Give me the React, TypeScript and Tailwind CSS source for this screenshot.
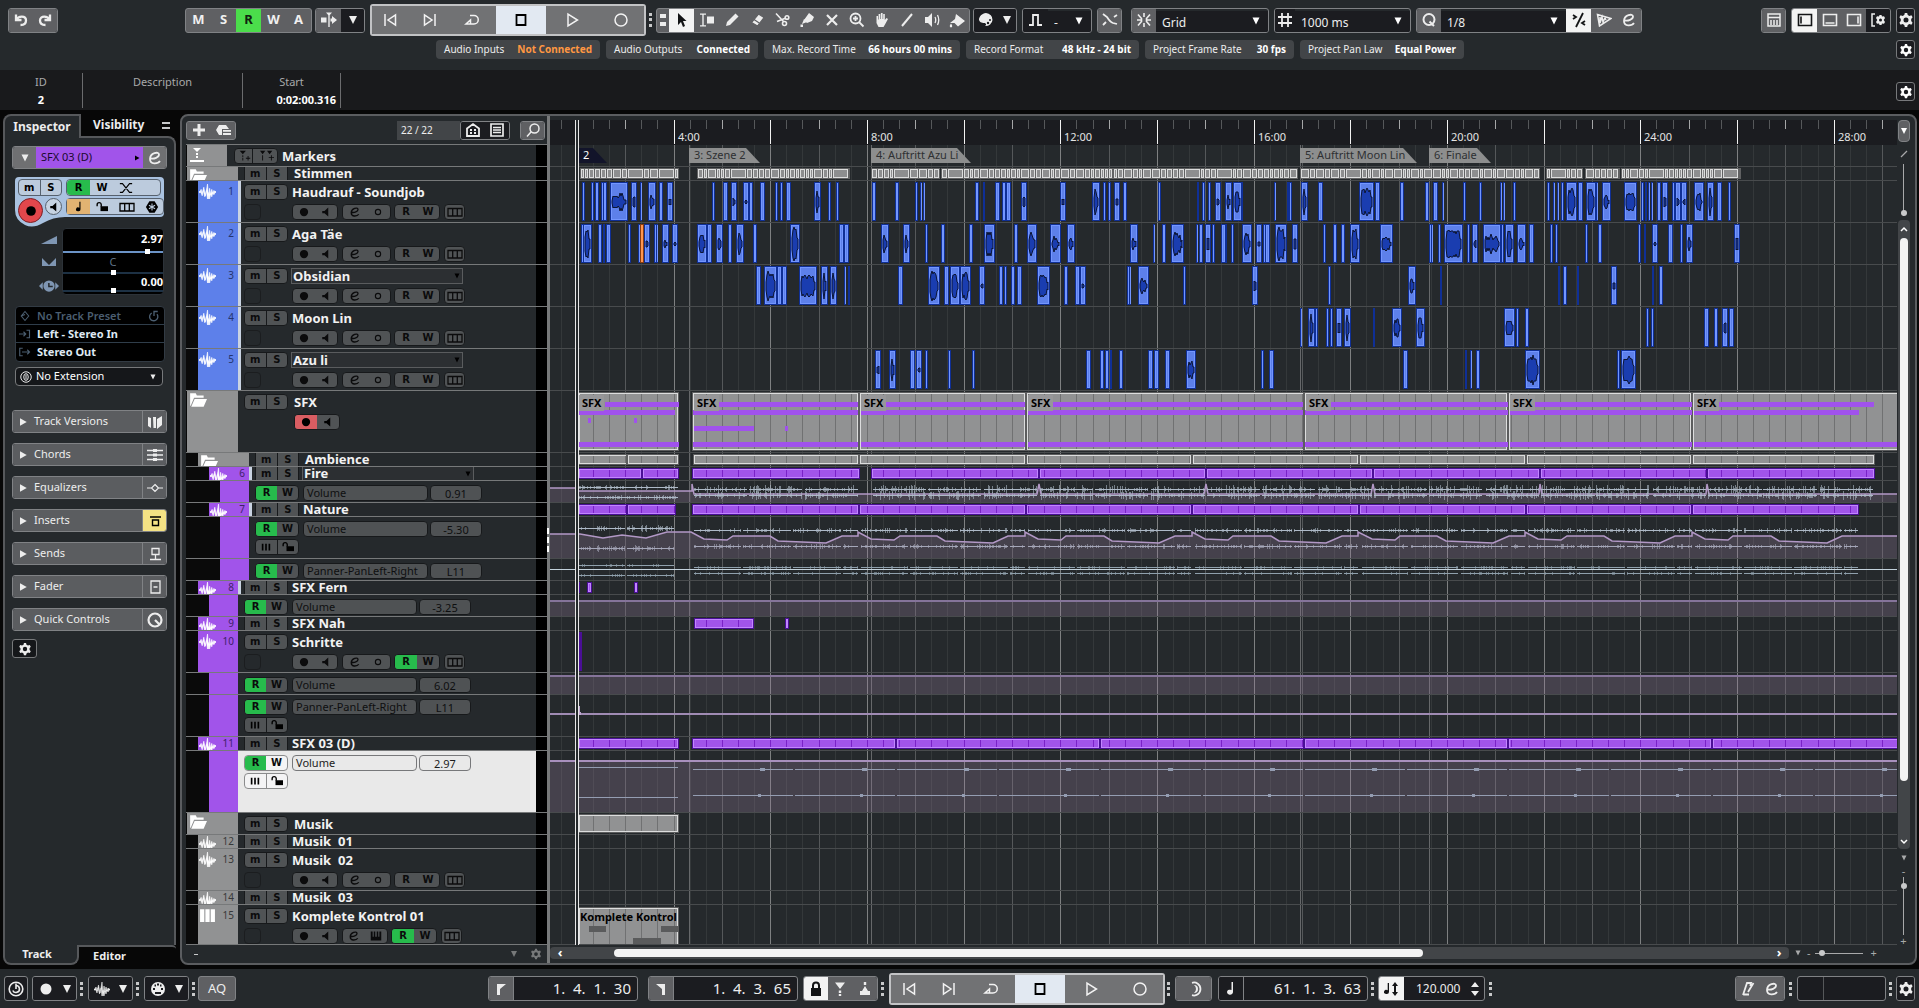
import type { ReactNode } from "react";
import { clsx } from "clsx";

/* ---------- timeline maths ---------- */

// clip positions are stored in ticks, 2.24 ticks to a pixel
const TICKS_PER_PX = 2.24;
const ORIGIN = 22;
const END = 3060;
const LATE = 1523; // offset of the second half of the show

const px = (tick: number) => Math.round((tick - ORIGIN) / TICKS_PER_PX);
const minuteToPx = (minute: number) => Math.round(minute * 48.34 - 69.8);

type Span = [number, number];

function spans(text: string, offset = 0): Span[] {
  return text.split(" ").map((part) => {
    const [start, end] = part.split("-").map(Number);
    return [start + offset, end + offset];
  });
}

function chain(...points: number[]): Span[] {
  return points.slice(1).map((end, i) => [points[i], end]);
}

function rng(seed: number) {
  let s = seed * 7919 + 13;
  return () => {
    s = (s * 1103515245 + 12345) % 2147483648;
    return s / 2147483648;
  };
}

/* ---------- clip data ---------- */

const haudrauf = [
  ...spans(
    "94-101 113-121 122-131 136-141 141-149 156-196 203-218 223-229 242-259 266-275 283-297 384-391 409-421 427-441 454-467 467-477 492-503 526-532 538-543 550-561 614-628 644-651 663-669 744-752 795-803 839-846 851-856 857-863 973-982 992-996 1018-1029 1034-1043 1043-1054 1077-1090 1164-1177 1235-1253 1261-1267 1272-1278 1285-1299 1306-1314 1385-1391 1472-1476 1483-1489 1496-1503 1511-1526 1536-1549 1553-1575",
  ),
  ...spans(
    "12-26 30-50 120-125 149-153 155-160 182-196 219-230 312-345 347-358 404-412 458-467 477-488 496-502 544-551 580-587 627-632 633-639 657-663 732-739 746-751 754-760 763-770 775-800 802-813 820-841 841-847 855-876 904-933 942-950 951-955 959-964 965-970 979-988 990-1004 1012-1019 1020-1033 1033-1045 1061-1084 1091-1107 1113-1125 1138-1145",
    LATE,
  ),
];

const agaTaee = [
  ...spans(
    "91-96 97-116 130-138 140-144 147-158 196-203 219-224 232-245 254-259 260-265 272-289 296-308 352-373 373-386 393-409 421-429 439-457 476-485 560-581 669-680 680-692 764-781 812-828 862-868 898-907 960-969 995-1019 1061-1070 1090-1112 1143-1167 1181-1197 1322-1339 1372-1377 1392-1402 1412-1442 1468-1473 1475-1484 1489-1502 1504-1511 1526-1538 1548-1554",
  ),
  ...spans(
    "2-14 25-31 50-71 80-95 96-101 101-112 124-149 161-174 230-238 252-261 270-279 292-313 358-387 468-473 473-478 488-495 501-545 552-560 564-577 588-629 630-635 638-658 666-685 692-703 738-746 750-757 817-823 846-856 936-943 950-954 968-982 1004-1015 1031-1036 1044-1060 1152-1165",
    LATE,
  ),
];

const obsidian = [
  ...spans(
    "484-494 501-530 530-541 541-553 579-619 628-644 649-664 680-685 690-694 802-812 868-895 905-915 919-940 940-965 982-996 1028-1036 1040-1046 1054-1063 1069-1079 1114-1143 1174-1182 1197-1209 1209-1222 1314-1319 1319-1324 1339-1363 1440-1447",
  ),
  ...spans("71-84 242-249 420-439 493-497 758-762 769-778 799-803 876-889 967-971 983-992", LATE),
];

const moonLin = spans(
  "178-183 196-212 212-219 238-243 247-253 260-272 278-293 343-347 386-407 438-459 636-660 662-670 682-693 953-961 965-971 1084-1096 1106-1115 1125-1137 1139-1152",
  LATE,
);

const azuLi = [
  ...spans(
    "750-764 782-796 828-840 842-856 862-869 913-920 968-973 1223-1234 1255-1262 1266-1274 1277-1281 1297-1306 1362-1372 1376-1386 1400-1411 1446-1469",
  ),
  ...spans("92-99 110-121 409-421 549-553 559-565 574-583 682-717 888-895 898-932", LATE),
];

const stimmen = [
  ...spans("90-310 352-694 742-896 898-1282 1284-1698"),
  ...spans("179-717 731-814 817-895 897-1166", LATE),
];

const sfxFolder = chain(340, 715, 1089, 1711, 2169, 2581, END);
const ambience = [...chain(84, 194, 312), ...chain(342, 714, 1088, 1460, 1834, 2208, 2581, 2989)];
const fire = [...chain(84, 227, 312), [341, 717] as Span, ...chain(742, 1117, 1491, 1865, 2240, 2614, 2989)];
const nature = [...chain(84, 194, 304), ...chain(341, 714, 1088, 1460, 1834, 2208, 2581, 2955)];
const sfx03 = [[84, 312] as Span, ...chain(340, 797, 1254, 1711, 2168, 2625, END)];

const markers = [
  { at: 333, end: 492, label: "3: Szene 2" },
  { at: 740, end: 964, label: "4: Auftritt Azu Li" },
  { at: 1701, end: 1964, label: "5: Auftritt Moon Lin" },
  { at: 1991, end: 2130, label: "6: Finale" },
];

/* ---------- timeline pieces ---------- */

function Canvas({ children }: { children: ReactNode }) {
  return (
    <svg className="absolute inset-0 h-full w-full" shapeRendering="crispEdges" aria-hidden="true">
      {children}
    </svg>
  );
}

function envelope(x: number, w: number, mid: number, seed: number) {
  const rand = rng(seed);
  const base = 4 + rand() * 10;
  const top: string[] = [];
  const bottom: string[] = [];
  for (let i = 0; i <= w; i += 1) {
    const edge = i === 0 || i >= w - 1 ? 0.4 : 1;
    const spread = i % 2 ? 1.5 : 7;
    const amp = Math.max(1, Math.round((base + (rand() - 0.5) * spread) * edge));
    top.push(`${x + i},${mid - amp}`);
    bottom.unshift(`${x + i},${mid + amp}`);
  }
  return [...top, ...bottom].join(" ");
}

function VoiceClips({ items, hot }: { items: Span[]; hot?: Span }) {
  return (
    <Canvas>
      {items.map(([start, end]) => {
        const x = px(start);
        const w = Math.max(px(end) - x, 2);
        return (
          <g key={start}>
            <rect x={x} y={1} width={w} height={39} fill="#0f2f96" />
            {end - start > 4 && <rect x={x + 1} y={2} width={Math.max(w - 2, 1)} height={37} fill="#7396ff" />}
            {w > 4 && <rect x={x + 2} y={3} width={w - 4} height={35} fill="#5d80ea" />}
            {end - start > 10 && w > 5 && (
              <polygon
                points={envelope(x + 2, w - 4, 21, start)}
                fill="#1a3db0"
                stroke="#0b1536"
                strokeWidth={1}
                shapeRendering="auto"
              />
            )}
          </g>
        );
      })}
      {hot && (
        <>
          <rect x={px(hot[0])} y={1} width={4} height={39} fill="#8a3c10" />
          <rect x={px(hot[0]) + 1} y={2} width={2} height={37} fill="#ff9650" />
        </>
      )}
    </Canvas>
  );
}

function gridInside(x: number, w: number) {
  const lines: number[] = [];
  for (let m = 0; m < 96; m++) {
    const gx = minuteToPx(m / 3);
    if (gx > x + 1 && gx < x + w - 1) lines.push(gx);
  }
  return lines;
}

function Blocks({
  items,
  tone,
  top = 1,
  height = 11,
}: {
  items: Span[];
  tone: "purple" | "gray";
  top?: number;
  height?: number;
}) {
  const purple = tone === "purple";
  return (
    <Canvas>
      {items.map(([start, end]) => {
        const x = px(start);
        const w = Math.max(px(end) - x, 2);
        return (
          <g key={start}>
            <rect x={x} y={top} width={w} height={height} fill={purple ? "#4a0f96" : "#5c5d5e"} />
            {end - start > 7 && (
              <rect
                x={x + 1}
                y={top + 1}
                width={Math.max(w - 2, 1)}
                height={height - 2}
                fill={purple ? "#c285ff" : "#dcdddd"}
              />
            )}
            {w > 4 && (
              <rect x={x + 2} y={top + 2} width={w - 4} height={height - 4} fill={purple ? "#a154ea" : "#919293"} />
            )}
            {gridInside(x, w).map((gx) => (
              <rect
                key={gx}
                x={gx}
                y={top + 2}
                width={1}
                height={height - 4}
                fill={purple ? "#7a22c8" : "#707172"}
              />
            ))}
          </g>
        );
      })}
    </Canvas>
  );
}

function FolderPieces() {
  const rand = rng(5);
  return (
    <Canvas>
      {stimmen.map(([start, end]) => {
        const x = px(start);
        const w = px(end) - x;
        const pieces: Span[] = [];
        let at = x + 1;
        while (at < x + w - 3) {
          const roll = rand();
          const size = roll > 0.93 ? 15 : roll > 0.72 ? 8 : roll > 0.35 ? 5 : 3;
          pieces.push([at, Math.min(size, x + w - 1 - at)]);
          at += size + 1;
        }
        return (
          <g key={start}>
            <rect x={x} y={1} width={w} height={11} fill="#606162" />
            {pieces.map(([p, s]) => (
              <g key={p}>
                <rect x={p} y={2} width={s} height={9} fill="#dcdddd" />
                {s > 2 && <rect x={p + 1} y={3} width={s - 2} height={7} fill="#8d8e8f" />}
              </g>
            ))}
          </g>
        );
      })}
    </Canvas>
  );
}

function Wave({ from, to, y, amp, color = "#aebac8" }: { from: number; to: number; y: number; amp: number; color?: string }) {
  const rand = rng(Math.round(from + y));
  const x = px(from);
  const w = px(to) - x;
  let d = "";
  for (let i = 0; i < w; i++) {
    const r = rand();
    const a = Math.round(r ** 4 * amp);
    if (a) d += `M${x + i} ${y - a}v${a * 2 + 1}`;
  }
  return (
    <>
      <path d={d} transform="translate(0.5 0)" stroke={color} strokeWidth={1} opacity={0.6} />
      <rect x={x} y={y} width={w} height={1} fill={color} />
    </>
  );
}

function Automation({ points, floor }: { points: Span[]; floor: number }) {
  const line = points.map(([t, y]) => `${px(t)},${y}`).join(" ");
  return (
    <>
      <polygon points={`${line} ${px(END)},${floor} 0,${floor}`} fill="rgb(147 124 151 / 0.3)" />
      <polyline points={line} fill="none" stroke="#b298c6" strokeWidth={1.5} shapeRendering="auto" />
    </>
  );
}

const repeats = [0, 374, 747, 1121, 1495, 1868, 2242];

function FireVolume() {
  const points: Span[] = [[22, 7], [84, 7], [84, 10], [340, 10], [340, 3], [345, 13]];
  for (const at of [1117, 1491, 1865, 2240, 2614]) points.push([at - 3, 13], [at, 3], [at + 4, 13]);
  points.push([END, 13]);
  const parts: Span[] = [[345, 464], [468, 587], [594, 712]];
  for (let i = 0; i < 6; i++) {
    const o = i * 374.2;
    parts.push([746 + o, 865 + o], [869 + o, 988 + o], [995 + o, 1114 + o]);
  }
  return (
    <Canvas>
      <Automation points={points} floor={21} />
      {[6, 16].map((y) => (
        <Wave key={y} from={87} to={309} y={y} amp={2} />
      ))}
      {parts.map(([a, b]) => (
        <g key={a}>
          <Wave from={a} to={b} y={8} amp={4} />
          <Wave from={a} to={b} y={14} amp={4} />
        </g>
      ))}
    </Canvas>
  );
}

const natureParts: Span[] = repeats.flatMap((o) =>
  ([[345, 450], [455, 562], [567, 674], [679, 711]] as Span[]).map(([a, b]): Span => [a + o, b + o]),
);

function NatureVolume() {
  const points: Span[] = [[22, 17], [90, 17], [140, 21], [183, 18], [238, 21], [284, 15], [338, 15]];
  for (const o of repeats) {
    points.push([368 + o, 22], [419 + o, 23], [431 + o, 19], [515 + o, 19], [533 + o, 24], [640 + o, 26], [675 + o, 19]);
    if (o < 2242) points.push([712 + o, 19], [712 + o, 15]);
  }
  points.push([END, 19]);
  return (
    <Canvas>
      {[11, 31].map((y) => (
        <g key={y}>
          <Wave from={87} to={190} y={y} amp={3} />
          <Wave from={195} to={300} y={y} amp={3} />
        </g>
      ))}
      {natureParts.map(([a, b]) => (
        <g key={a}>
          <Wave from={a} to={b} y={13} amp={2} />
          <Wave from={a} to={b} y={29} amp={2} />
        </g>
      ))}
      <Automation points={points} floor={41} />
    </Canvas>
  );
}

function NaturePanner() {
  return (
    <Canvas>
      <rect x={0} y={10} width="100%" height={1} fill="#c3d2dc" />
      {[6, 16].map((y) => (
        <g key={y}>
          <Wave from={87} to={190} y={y} amp={1} color="#8fa0ac" />
          <Wave from={195} to={300} y={y} amp={1} color="#8fa0ac" />
        </g>
      ))}
      {natureParts.map(([a, b]) => (
        <g key={a}>
          <Wave from={a} to={b} y={8} amp={1} color="#8fa0ac" />
          <Wave from={a} to={b} y={14} amp={1} color="#8fa0ac" />
        </g>
      ))}
    </Canvas>
  );
}

function FlatLane({ y, floor }: { y: number; floor: number }) {
  return (
    <Canvas>
      <rect x={0} y={y} width="100%" height={floor - y} fill="rgb(147 124 151 / 0.3)" />
      <rect x={0} y={y} width="100%" height={2} fill="#85749a" />
    </Canvas>
  );
}

function Sfx03Volume() {
  const parts: Span[] = [];
  for (let a = 342; a < END; a += 228.5) parts.push([a, a + 225]);
  return (
    <Canvas>
      <rect x={0} y={10} width="100%" height={51} fill="rgb(147 124 151 / 0.3)" />
      <rect x={0} y={9} width="100%" height={2} fill="#a890bd" />
      <rect x={px(87)} y={16} width={99} height={1} fill="#949db2" />
      <rect x={px(87)} y={46} width={99} height={1} fill="#949db2" />
      {parts.map(([a, b]) => (
        <g key={a} fill="#949db2">
          <rect x={px(a)} y={18} width={px(b) - px(a)} height={1} />
          <rect x={px(a)} y={44} width={px(b) - px(a)} height={1} />
          <rect x={px(a + 150)} y={17} width={5} height={3} />
          <rect x={px(a + 145)} y={43} width={3} height={3} />
        </g>
      ))}
    </Canvas>
  );
}

function ClipLabel({ at, children }: { at: number; children: ReactNode }) {
  return (
    <span
      className="absolute top-1 bg-[#979799] px-[3px] text-[11px] leading-4 font-bold text-black"
      style={{ left: px(at) }}
    >
      {children}
    </span>
  );
}

function SfxLane() {
  const bar = (a: number, b: number, y: number) => (
    <rect key={`${a}-${y}`} x={px(a)} y={y} width={px(b) - px(a)} height={5} fill="#a052ec" />
  );
  return (
    <>
      <Blocks items={[[84, 312], ...sfxFolder]} tone="gray" top={1} height={59} />
      <Canvas>
        {bar(146, 310, 11)}
        {bar(87, 302, 19)}
        {bar(107, 114, 27)}
        {bar(211, 217, 27)}
        {bar(345, 478, 35)}
        {bar(549, 556, 35)}
        {bar(87, 310, 51)}
        {sfxFolder.map(([a, b]) => (
          <g key={a}>
            {bar(a + 60, Math.min(b - 2, 2988), 11)}
            {bar(a + 3, Math.min(b - 2, 2954), 19)}
            {bar(a + 3, b - 2, 51)}
          </g>
        ))}
      </Canvas>
      <ClipLabel at={87}>SFX</ClipLabel>
      {sfxFolder.map(([a]) => (
        <ClipLabel key={a} at={a + 4}>
          SFX
        </ClipLabel>
      ))}
    </>
  );
}

function MarkerLane() {
  return (
    <>
      <div
        className="absolute top-[3px] flex h-[15px] w-7 items-center bg-[#12142a] pl-1 text-[11px] text-white [clip-path:polygon(0_0,50%_0,100%_100%,0_100%)]"
        style={{ left: px(86) }}
      >
        2
      </div>
      {markers.map((m) => (
        <div
          key={m.label}
          className="absolute top-[3px] flex h-[15px] items-center overflow-hidden bg-[#8d8e8e] pl-[5px] text-[11px] whitespace-nowrap text-[#2e3032] [clip-path:polygon(0_0,calc(100%-14px)_0,100%_100%,0_100%)]"
          style={{ left: px(m.at), width: px(m.end) - px(m.at) }}
        >
          {m.label}
        </div>
      ))}
    </>
  );
}

function KompleteLane() {
  return (
    <>
      <Blocks items={[[84, 312]]} tone="gray" top={2} height={60} />
      <Canvas>
        <rect x={39} y={21} width={17} height={6} fill="#5a5b5c" />
        <rect x={111} y={21} width={17} height={6} fill="#5a5b5c" />
        <rect x={83} y={33} width={28} height={6} fill="#5a5b5c" />
      </Canvas>
      <span className="absolute top-1 left-7 w-[101px] overflow-hidden pl-0.5 text-[11px] leading-4 font-bold whitespace-nowrap text-black">
        Komplete Kontrol 01
      </span>
    </>
  );
}

/* ---------- track data ---------- */

type Row = {
  kind: "marker" | "folder" | "audio" | "instrument" | "lane";
  name: string;
  h: string;
  depth?: 0 | 1 | 2;
  num?: number;
  color?: string;
  edge?: boolean;
  select?: boolean;
  big?: boolean;
  read?: boolean;
  value?: string;
  more?: boolean;
  selected?: boolean;
  lane?: ReactNode;
};

const BLUE = "bg-[#5d80ea] text-[#24356e]";
const PURPLE = "bg-[#a154ea] text-[#40206a]";
const GRAY = "bg-[#919293] text-[#38393a]";

const rows: Row[] = [
  { kind: "marker", name: "Markers", h: "h-[22px]", lane: <MarkerLane /> },
  { kind: "folder", name: "Stimmen", h: "h-[14px]", lane: <FolderPieces /> },
  { kind: "audio", name: "Haudrauf - Soundjob", h: "h-[42px]", num: 1, color: BLUE, edge: true, big: true, lane: <VoiceClips items={haudrauf} /> },
  { kind: "audio", name: "Aga Täe", h: "h-[42px]", num: 2, color: BLUE, edge: true, big: true, lane: <VoiceClips items={agaTaee} hot={[223, 231]} /> },
  { kind: "audio", name: "Obsidian", h: "h-[42px]", num: 3, color: BLUE, edge: true, big: true, select: true, lane: <VoiceClips items={obsidian} /> },
  { kind: "audio", name: "Moon Lin", h: "h-[42px]", num: 4, color: BLUE, edge: true, big: true, lane: <VoiceClips items={moonLin} /> },
  { kind: "audio", name: "Azu li", h: "h-[42px]", num: 5, color: BLUE, edge: true, big: true, select: true, lane: <VoiceClips items={azuLi} /> },
  { kind: "folder", name: "SFX", h: "h-[62px]", big: true, lane: <SfxLane /> },
  { kind: "folder", name: "Ambience", h: "h-[14px]", depth: 1, lane: <Blocks items={ambience} tone="gray" /> },
  { kind: "audio", name: "Fire", h: "h-[14px]", depth: 2, num: 6, color: PURPLE, edge: true, select: true, lane: <Blocks items={fire} tone="purple" /> },
  { kind: "lane", name: "Volume", value: "0.91", h: "h-[22px]", depth: 2, lane: <FireVolume /> },
  { kind: "audio", name: "Nature", h: "h-[14px]", depth: 2, num: 7, color: PURPLE, edge: true, lane: <Blocks items={nature} tone="purple" /> },
  { kind: "lane", name: "Volume", value: "-5.30", h: "h-[42px]", depth: 2, more: true, lane: <NatureVolume /> },
  { kind: "lane", name: "Panner-PanLeft-Right", value: "L11", h: "h-[22px]", depth: 2, lane: <NaturePanner /> },
  { kind: "audio", name: "SFX Fern", h: "h-[14px]", num: 8, color: PURPLE, edge: true, lane: <Blocks items={spans("84-90 106-115 211-220")} tone="purple" /> },
  { kind: "lane", name: "Volume", value: "-3.25", h: "h-[22px]", lane: <FlatLane y={5} floor={21} /> },
  { kind: "audio", name: "SFX Nah", h: "h-[14px]", num: 9, color: PURPLE, lane: <Blocks items={spans("345-479 549-558")} tone="purple" /> },
  { kind: "audio", name: "Schritte", h: "h-[42px]", num: 10, color: PURPLE, big: true, read: true, lane: <Blocks items={[[87, 93]]} tone="purple" height={39} /> },
  { kind: "lane", name: "Volume", value: "6.02", h: "h-[22px]", lane: <FlatLane y={2} floor={21} /> },
  {
    kind: "lane",
    name: "Panner-PanLeft-Right",
    value: "L11",
    h: "h-[42px]",
    more: true,
    lane: (
      <Canvas>
        <rect x={0} y={18} width="100%" height={2} fill="#a08bb4" />
        <polygon points="28,0 29,8 31,20 28,20" fill="#bda6cf" />
      </Canvas>
    ),
  },
  { kind: "audio", name: "SFX 03 (D)", h: "h-[14px]", num: 11, color: PURPLE, lane: <Blocks items={sfx03} tone="purple" /> },
  { kind: "lane", name: "Volume", value: "2.97", h: "h-[62px]", more: true, selected: true, lane: <Sfx03Volume /> },
  { kind: "folder", name: "Musik", h: "h-[22px]", lane: <Blocks items={[[84, 312]]} tone="gray" top={1} height={19} /> },
  { kind: "audio", name: "Musik  01", h: "h-[14px]", num: 12, color: GRAY },
  { kind: "audio", name: "Musik  02", h: "h-[42px]", num: 13, color: GRAY, big: true },
  { kind: "audio", name: "Musik  03", h: "h-[14px]", num: 14, color: GRAY },
  { kind: "instrument", name: "Komplete Kontrol 01", h: "h-[40px]", num: 15, color: GRAY, big: true, read: true, lane: <KompleteLane /> },
];

/* ---------- icons ---------- */

const icons = {
  undo: <path d="M3 2.500v5.500h5.500M3.500 7.500C5 4 13 3 13 8.500c0 3.500-3 4.500-5.500 4.500" fill="none" stroke="currentColor" strokeWidth="2.300" />,
  redo: <path d="M13 2.500v5.500H7.500M12.500 7.500C11 4 3 3 3 8.500 3 12 6 13 8.500 13" fill="none" stroke="currentColor" strokeWidth="2.300" />,
  prev: <path d="M2 2v12M12.500 3v10L5 8z" fill="none" stroke="currentColor" strokeWidth="1.500" />,
  next: <path d="M14 2v12M3.500 3v10L11 8z" fill="none" stroke="currentColor" strokeWidth="1.500" />,
  loop: <path d="M6 3.500h4a4 4 0 0 1 0 8.500H2l4.500-4V12" fill="none" stroke="currentColor" strokeWidth="1.500" />,
  stop: <path d="M3.500 3h9v10h-9z" fill="none" stroke="currentColor" strokeWidth="1.800" />,
  play: <path d="M4 2v12l9.500-6z" fill="none" stroke="currentColor" strokeWidth="1.500" />,
  record: <circle cx="8" cy="8" r="6" fill="none" stroke="currentColor" strokeWidth="1.500" />,
  snapshot: <path d="M0 5.500h5.500v5H0zM7.300 3h1.400v12H7.300zM5 .5h6L8 4zM9.500 6.500H11V4l5 4-5 4V9.500H9.500z" fill="currentColor" />,
  caret: <path d="M4 4h8l-4 8z" fill="currentColor" />,
  right: <path d="M4 3v10l9-5z" fill="currentColor" />,
  pointer: <path d="M4 1l8.500 8H9l2 5-2 1-2-5-3 3z" fill="currentColor" />,
  range: <path d="M1 1.500h6v1.300H4.700v10.400H7v1.300H1v-1.300h2.300V2.800H1zM8 4.500h7v7H8z" fill="currentColor" />,
  pencil: <path d="M2 14l1-4L11.500 1.500l3 3L6 13z" fill="currentColor" />,
  eraser: <path d="M9.500 2L15 5.500 8.500 14 2.500 10.500zM5 7.500l6 4" fill="currentColor" stroke="#5f6063" strokeWidth="1.200" />,
  scissors: (
    <g fill="none" stroke="currentColor" strokeWidth="1.600">
      <path d="M2 1.500l7.500 8M12 6L3 9.500" />
      <circle cx="10.500" cy="11.500" r="2" />
      <circle cx="13" cy="5.500" r="1.800" />
    </g>
  ),
  glue: <path d="M10 1l5 4-2 4-5 2-3-3zM5 7l3 3-5 2zM1.500 12.500h2.500V15H1.500z" fill="currentColor" />,
  x: <path d="M3 3l10 10M13 3L3 13" stroke="currentColor" strokeWidth="2.200" />,
  zoom: <path d="M10.500 10.500l4 4M6.500 4v5M4 6.500h5M11.500 6.500a5 5 0 1 1-10 0 5 5 0 0 1 10 0z" fill="none" stroke="currentColor" strokeWidth="1.800" />,
  hand: <path d="M2.500 7.500V4H4v3.500h.6V2h1.700v5h.6V1h1.700v6h.6V2h1.600v6l1.700-2 1.500 1-3 5.500-1.500 2.500h-5L2.500 11z" fill="currentColor" />,
  line: <path d="M3 14L13 2" stroke="currentColor" strokeWidth="2" />,
  speaker: (
    <g>
      <path d="M1 5h3l4-4v14l-4-4H1z" fill="currentColor" />
      <path d="M11 5q1.500 3 0 6M13.500 3q2.500 5 0 10" fill="none" stroke="currentColor" strokeWidth="1.300" />
    </g>
  ),
  bucket: <path d="M7 2l9 7-7 5.500L5.500 11H1l5-4zM2 11.500q2.500 3 0 4-2.500-1 0-4z" fill="currentColor" />,
  palette: (
    <g>
      <path d="M8 1a7 6.500 0 1 1-1 13c2-1 1-3-1-3S1 10 1 7.500 4 1 8 1z" fill="currentColor" />
      <circle cx="10" cy="11" r="1.200" fill="#1b1c20" />
      <circle cx="12" cy="8" r="1" fill="#1b1c20" />
    </g>
  ),
  pulse: <path d="M1 13h4V3h5v10h4" fill="none" stroke="currentColor" strokeWidth="1.800" />,
  cross: <path d="M1 2l4 3q3 5 6 6l4 1M1 13l3-3M12 5l3-2" fill="none" stroke="currentColor" strokeWidth="1.800" />,
  snap: <path d="M8 1v4M8 11v4M2 2.500l3.500 4v3L2 13.500M14 2.500l-3.500 4v3l3.500 4M1 8h4M11 8h4" fill="none" stroke="currentColor" strokeWidth="1.600" />,
  hash: <path d="M5 1v14M11 1v14M1 5h14M1 11h14" stroke="currentColor" strokeWidth="1.800" />,
  q: <path d="M13.500 7.500a5.500 5.500 0 1 1-11 0 5.500 5.500 0 0 1 11 0zM8.500 9.500l4.500 4.500" fill="none" stroke="currentColor" strokeWidth="2" />,
  swing: <path d="M12 1L5 15M2 3l3 2-3 2M14 9l-3 2 3 2" fill="none" stroke="currentColor" strokeWidth="1.800" />,
  warp: <path d="M1.500 2.500L15 6.500 3.500 14zM4 5v6l2-6 1 5 2-4 1 2" fill="none" stroke="currentColor" strokeWidth="1.500" />,
  edit: <path d="M4 8.500c3 .5 8-1 8-4C12 1 3 3 3 9c0 6 8 5 10 2" fill="none" stroke="currentColor" strokeWidth="1.800" />,
  keys: <path d="M2 2h12v12H2zM2 5.500h12M5 8v5M8 8v5M11 8v5" fill="none" stroke="currentColor" strokeWidth="1.500" />,
  zoneL: <path d="M1.500 2.500h13v11h-13zM4 4.500v7" fill="none" stroke="currentColor" strokeWidth="1.600" />,
  zoneB: <path d="M1.500 2.500h13v11h-13zM3.500 11h9" fill="none" stroke="currentColor" strokeWidth="1.600" />,
  zoneR: <path d="M1.500 2.500h13v11h-13zM12 4.500v7" fill="none" stroke="currentColor" strokeWidth="1.600" />,
  gear: (
    <path
      d="M6.800 1h2.400l.5 2 1.700.9 2-.6 1.200 2L13.200 7v2l1.400 1.700-1.200 2-2-.6-1.700.9-.5 2H6.800l-.5-2-1.700-.9-2 .6-1.200-2L2.800 9V7L1.400 5.300l1.200-2 2 .6L6.300 3zM8 5.500a2.500 2.500 0 1 0 0 5 2.500 2.500 0 0 0 0-5z"
      fill="currentColor"
      fillRule="evenodd"
    />
  ),
  bracketGear: (
    <g>
      <path d="M5 2H2v12h3" fill="none" stroke="currentColor" strokeWidth="1.500" />
      <path d="M9.500 3h2l.5 1.500 2-.3 1 1.800-1.300 2 1.300 2-1 1.800-2-.3-.5 1.500h-2L9 11.500l-2 .3L6 10l1.300-2L6 6l1-1.800 2 .3zm1 3.500a1.500 1.500 0 1 0 0 3 1.500 1.500 0 0 0 0-3z" fill="currentColor" fillRule="evenodd" />
    </g>
  ),
  wave: <path d="M0 8h1l1-2 1 4 1.500-6L6 12l1.500-8L8 1l1 14 1-10 1 6 1-5 1 4 1-3 1 1h1v1h-1l-1 2-1-2-1 4-1-3-1 5-1-6-1 6-1-8-1.500 6L4 7l-1 5-1-3-1 0H0z" fill="currentColor" stroke="currentColor" strokeWidth=".6" />,
  folder: <path d="M1 13V2h5l1 2h6v2H4.500L1.500 13zM5 7h11l-3 7H2z" fill="currentColor" />,
  piano: <path d="M1 2h4v12H1zM6 2h4v12H6zM11 2h4v12h-4z" fill="currentColor" />,
  pianoDark: <path d="M1 2h2.500v7h1.500V2h2v7h2V2h2v7h1.500V2H15v12H1z" fill="currentColor" />,
  dot: <circle cx="8" cy="8" r="5.500" fill="currentColor" />,
  monitor: <path d="M11 2v12L6 9.500H3v-3h3z" fill="currentColor" />,
  ring: <circle cx="8" cy="8" r="3.500" fill="none" stroke="currentColor" strokeWidth="1.500" />,
  lanes: <path d="M1 4.500h14v7.500H1zM5.700 4.500V12M10.300 4.500V12" fill="none" stroke="currentColor" strokeWidth="1.300" />,
  bars: <path d="M3.500 3.500v9M8 3.500v9M12.500 3.500v9" stroke="currentColor" strokeWidth="2.200" />,
  unlock: (
    <g>
      <path d="M6 7h10v6.500H6z" fill="currentColor" />
      <path d="M7 7.500V5A2.700 2.700 0 0 0 1.500 5v2" fill="none" stroke="currentColor" strokeWidth="1.800" />
    </g>
  ),
  lock: (
    <g>
      <path d="M3 7h10v8H3z" fill="currentColor" />
      <path d="M5 7.500V4.500a3 3 0 0 1 6 0v3" fill="none" stroke="currentColor" strokeWidth="2" />
    </g>
  ),
  note: <path d="M10 1v10a3 2.500 0 1 1-1.500-2V1z" fill="currentColor" />,
  freeze: (
    <g>
      <path d="M5 1.500h6L15 8l-4 6.500H5L1 8z" fill="currentColor" />
      <path d="M8 4v8M4.500 6l7 4M11.500 6l-7 4" stroke="#bccbdd" strokeWidth="1.200" />
    </g>
  ),
  xfade: <path d="M1 3h3l8 10h3M1 13h3l8-10h3" fill="none" stroke="currentColor" strokeWidth="1.300" />,
  plus: <path d="M8 2v12M2 8h12" stroke="currentColor" strokeWidth="3" />,
  preset: (
    <g>
      <path d="M1 8l3-5h7l3 4H7v6H4z" fill="currentColor" />
      <path d="M8 8.800h8M8 12h8" stroke="currentColor" strokeWidth="1.800" />
    </g>
  ),
  home: <path d="M2 6.500L8 2l6 4.500V14H2zM5 8h2M9 8h2M5 11h2M9 11h2" fill="none" stroke="currentColor" strokeWidth="1.800" />,
  list: <path d="M2 2h12v12H2zM4 5.500h8M4 8h8M4 10.500h8" fill="none" stroke="currentColor" strokeWidth="1.700" />,
  find: <path d="M14 6.500a4.500 4.500 0 1 1-9 0 4.500 4.500 0 0 1 9 0zM6 10l-4 4.500" fill="none" stroke="currentColor" strokeWidth="1.500" />,
  versions: <path d="M1 3l3 1v10l-3-2zM6 3h3v11H6.500zM10 5l5-3v9l-5 4z" fill="currentColor" />,
  chords: (
    <g>
      <path d="M0 3.500h16M0 8h16M0 12.500h16" stroke="currentColor" strokeWidth="1.400" />
      <path d="M6 2h4v3H6zM6 6.500h4v3H6zM6 11h4v3H6z" fill="currentColor" />
    </g>
  ),
  eq: <path d="M0 8h4.500M11.500 8H16M8 4.500L11.500 8 8 11.500 4.500 8z" fill="none" stroke="currentColor" strokeWidth="1.200" />,
  inserts: <path d="M3 4h11M5.500 7h6v5.500h-6z" fill="none" stroke="currentColor" strokeWidth="1.400" />,
  sends: <path d="M5 2.500h7v6H5zM8.500 8.500V13M3 13.500h11" fill="none" stroke="currentColor" strokeWidth="1.300" />,
  fader: <path d="M4 2h9v12H4zM6.500 8h4" fill="none" stroke="currentColor" strokeWidth="1.300" />,
  knob: <path d="M14.500 8a6.500 6.500 0 1 1-13 0 6.500 6.500 0 0 1 13 0zM8 8l4 4" fill="none" stroke="currentColor" strokeWidth="2.200" />,
  gainWedge: <path d="M0 12L16 4v8z" fill="currentColor" />,
  pan: <path d="M1 4l7 7 7-7v8H1z" fill="currentColor" />,
  delay: <path d="M0 8l3-3v6zM16 8l-3-3v6zM8 3.500a4.500 4.500 0 1 0 0 9 4.500 4.500 0 0 0 0-9zm-.7 2h1.200v2.300H11V9H7.300z" fill="currentColor" fillRule="evenodd" />,
  diamond: <path d="M8 2l5 6-5 6-5-6zM3 8l5-2" fill="none" stroke="currentColor" strokeWidth="1.400" />,
  reset: <path d="M5 4a5.500 5.500 0 1 0 7 1.500M8 8V2h5" fill="none" stroke="currentColor" strokeWidth="1.800" />,
  input: <path d="M0 8h9M6 5l3 3-3 3M10 3h4v10h-4" fill="none" stroke="currentColor" strokeWidth="1.500" />,
  output: <path d="M5 3H1v10h4M4 8h10M11 5l3 3-3 3" fill="none" stroke="currentColor" strokeWidth="1.500" />,
  ext: (
    <g fill="none" stroke="currentColor" strokeWidth="1.300">
      <circle cx="8" cy="8" r="7" />
      <ellipse cx="8" cy="8" rx="3" ry="4.500" />
      <path d="M8 5v6" />
    </g>
  ),
  locL: <path d="M4 3h9L7 8v6H4z" fill="currentColor" />,
  locR: <path d="M12 3H3l6 5v6h3z" fill="currentColor" />,
  punchIn: <path d="M3 1.500h10L8 8zM6.800 9.500h2.400V12H6.800zM6.800 13h2.400v2H6.800z" fill="currentColor" />,
  punchOut: <path d="M6.800 1h2.400v3H6.800zM8 5l3 5h2v4H3v-4h2z" fill="currentColor" />,
  pre: (
    <g>
      <path d="M8 4a4 4 0 1 1 0 8 5 5 0 0 0 0-8z" fill="currentColor" />
      <path d="M6 1.800a6.500 6.500 0 1 1 0 12.400" fill="none" stroke="currentColor" strokeWidth="1.800" />
    </g>
  ),
  swirl: (
    <g fill="none" stroke="currentColor" strokeWidth="1.600">
      <circle cx="8" cy="8" r="6.800" />
      <path d="M8 4.500A3.500 3.500 0 1 1 4.800 9.500M8 2.500v5.500" />
    </g>
  ),
  midi: (
    <g>
      <circle cx="8" cy="8" r="7" fill="currentColor" />
      <path d="M3 8h2M11 8h2M7 3.500h2M4.500 4.500h1.500M10 4.500h1.500M5 12h6" stroke="#1b1c20" strokeWidth="2" />
    </g>
  ),
  tempo: <path d="M5 2v9a2.500 2 0 1 1-1.300-1.800V2zM11 1l3 4h-2v6h2l-3 4-3-4h2V5H8z" fill="currentColor" />,
  click: <path d="M3 14L7 2h4l-.7 3M3 13.500h6M13.500 2L8 11" fill="none" stroke="currentColor" strokeWidth="1.800" />,
  spin: <path d="M4 6l4-5 4 5zM4 10l4 5 4-5z" fill="currentColor" />,
  markerTrack: <path d="M4 1h8L8 5zM7 6h2v2H7zM7 9h2v2H7zM1 13h14v2H1z" fill="currentColor" />,
  addMarker: <path d="M2 2h7L5.500 6zM5 7h1v2H5zM5 10h1v3H5zM9 10h5v1H9zM11 8h1v5h-1z" fill="currentColor" />,
  addCycle: <path d="M0 2h6L3 6zM8 2h6l-3 4zM2.500 7h1v6h-1zM10 9h6v1h-6zM12.500 7h1v6h-1z" fill="currentColor" />,
};

type IconName = keyof typeof icons;

function Icon({ name, size = "size-4", className }: { name: IconName; size?: string; className?: string }) {
  return (
    <svg viewBox="0 0 16 16" className={clsx("shrink-0", size, className)} aria-hidden="true">
      {icons[name]}
    </svg>
  );
}

/* ---------- shared controls ---------- */

const frame = "flex shrink-0 overflow-hidden rounded-[3px] border border-[#808285]";

function Tool({ name, active, w = "w-[25px]", dark }: { name: IconName; active?: boolean; w?: string; dark?: boolean }) {
  return (
    <button
      aria-label={name}
      className={clsx(
        "flex h-full items-center justify-center",
        w,
        active ? "bg-[#f3f3f3] text-[#131416]" : dark ? "bg-[#1b1c20] text-[#ededed]" : "bg-[#5f6063] text-[#ededed]",
      )}
    >
      <Icon name={name} />
    </button>
  );
}

function GearButton() {
  return (
    <button aria-label="Set up" className="flex h-[19px] w-[19px] shrink-0 items-center justify-center rounded-[3px] border border-[#77797b] bg-[#1b1c20] text-white">
      <Icon name="gear" size="size-3.5" />
    </button>
  );
}

function Handle({ className }: { className?: string }) {
  return <span className={clsx("h-3.5 w-1 shrink-0 border-l-3 border-dotted border-[#c8c9ca]", className)} />;
}

function Dropdown({ label, value, w }: { label: string; value: string; w: string }) {
  return (
    <span className={clsx("relative h-full", w)}>
      <select aria-label={label} className="h-full w-full appearance-none bg-[#1b1c20] pl-1.5 text-[12px] text-[#ededed]">
        <option>{value}</option>
      </select>
      <Icon name="caret" size="size-3.5" className="pointer-events-none absolute top-[5px] right-[5px] text-white" />
    </span>
  );
}

function Transport({ className }: { className?: string }) {
  const items: { name: IconName; w: string }[] = [
    { name: "prev", w: "w-[37px]" },
    { name: "next", w: "w-[39px]" },
    { name: "loop", w: "w-[48px]" },
    { name: "stop", w: "w-[50px]" },
    { name: "play", w: "w-[51px]" },
    { name: "record", w: "w-[47px]" },
  ];
  return (
    <div className={clsx("flex h-8 shrink-0 overflow-hidden rounded-[3px] border-2 border-[#c2c3c5]", className)}>
      {items.map(({ name, w }) => (
        <button
          key={name}
          aria-label={name}
          className={clsx(
            "flex items-center justify-center",
            w,
            name === "stop" ? "bg-[#e2e9f2] text-black" : "bg-[#717274] text-[#f2f2f2]",
          )}
        >
          <Icon name={name} />
        </button>
      ))}
    </div>
  );
}

/* ---------- top ---------- */

const chips = [
  ["Audio Inputs", "Not Connected", "w-[164px]"],
  ["Audio Outputs", "Connected", "w-[152px]"],
  ["Max. Record Time", "66 hours 00 mins", "w-[196px]"],
  ["Record Format", "48 kHz - 24 bit", "w-[173px]"],
  ["Project Frame Rate", "30 fps", "w-[149px]"],
  ["Project Pan Law", "Equal Power", "w-[164px]"],
];

const tools: IconName[] = ["pointer", "range", "pencil", "eraser", "scissors", "glue", "x", "zoom", "hand", "line", "speaker", "bucket"];

function Toolbar() {
  return (
    <header className="bg-[#25292c]">
      <div className="flex h-10 items-center pr-1 pl-2">
        <div className={clsx(frame, "h-[25px]")}>
          <Tool name="undo" w="w-6" />
          <Tool name="redo" w="w-6" />
        </div>
        <div className={clsx(frame, "ml-[127px] h-[25px] bg-[#5f6063]")}>
          {["M", "S", "R", "W", "A"].map((letter) => (
            <button
              key={letter}
              className={clsx("w-[25px] text-[13px] font-bold", letter === "R" ? "bg-[#4bdd4b] text-[#10220f]" : "text-[#f0f0f0]")}
            >
              {letter}
            </button>
          ))}
        </div>
        <div className={clsx(frame, "ml-[3px] h-[25px]")}>
          <Tool name="snapshot" />
          <Tool name="caret" w="w-[23px]" dark />
        </div>
        <Transport className="ml-[5px]" />
        <Handle className="mx-[3px]" />
        <div className={clsx(frame, "h-[25px] bg-[#5f6063]")}>
          <span className="flex w-3 flex-col items-center justify-center gap-1">
            <span className="h-1 w-1.5 bg-[#ededed]" />
            <span className="h-1 w-1.5 bg-[#ededed]" />
          </span>
          {tools.map((name) => (
            <Tool key={name} name={name} active={name === "pointer"} />
          ))}
        </div>
        <div className={clsx(frame, "ml-[3px] h-[25px]")}>
          <Tool name="palette" w="w-6" dark />
          <Tool name="caret" w="w-[18px]" dark />
        </div>
        <div className={clsx(frame, "ml-[5px] h-[25px]")}>
          <Tool name="pulse" dark />
          <Dropdown label="Curve" value="-" w="w-[43px]" />
        </div>
        <div className={clsx(frame, "ml-[5px] h-[25px]")}>
          <Tool name="cross" w="w-[23px]" />
        </div>
        <div className={clsx(frame, "ml-[9px] h-[25px]")}>
          <Tool name="snap" w="w-6" />
          <Dropdown label="Snap type" value="Grid" w="w-[112px]" />
        </div>
        <div className={clsx(frame, "ml-[5px] h-[25px]")}>
          <Tool name="hash" w="w-5" dark />
          <Dropdown label="Grid type" value="1000 ms" w="w-[115px]" />
        </div>
        <div className={clsx(frame, "ml-[5px] h-[25px]")}>
          <Tool name="q" w="w-6" />
          <Dropdown label="Quantize" value="1/8" w="w-[125px]" />
          <Tool name="swing" active />
          <Tool name="warp" />
          <Tool name="edit" />
        </div>
        <div className={clsx(frame, "ml-auto h-[25px]")}>
          <Tool name="keys" w="w-[23px]" />
        </div>
        <div className={clsx(frame, "mx-[5px] h-[25px]")}>
          <Tool name="zoneL" active />
          <Tool name="zoneB" />
          <Tool name="zoneR" w="w-6" />
          <Tool name="bracketGear" w="w-6" dark />
        </div>
        <div className={clsx(frame, "h-[25px]")}>
          <Tool name="gear" w="w-[17px]" dark />
        </div>
      </div>

      <div className="flex h-[30px] items-start pr-1 pl-1">
        <dl className="flex flex-1 justify-center gap-1.5 text-[10px] leading-[19px] whitespace-nowrap text-[#ededed]">
          {chips.map(([label, value, w]) => (
            <div key={label} className={clsx("flex justify-between rounded-sm bg-[#424548] px-2", w)}>
              <dt>{label}</dt>
              <dd className={clsx("font-bold", value === "Not Connected" ? "text-[#ff9742]" : "text-white")}>{value}</dd>
            </div>
          ))}
        </dl>
        <GearButton />
      </div>

      <div className="flex h-10 items-center bg-[#191a1c] pr-1 text-center text-[11px] leading-[18px] text-[#a8a9aa]">
        <div className="h-[35px] w-[83px] border-r border-[#6b6c6e]">
          ID
          <div className="font-bold text-white">2</div>
        </div>
        <div className="h-[35px] w-40 border-r border-[#6b6c6e]">Description</div>
        <div className="h-[35px] w-[98px] border-r border-[#6b6c6e]">
          Start
          <div className="pr-1 text-right font-bold text-white">0:02:00.316</div>
        </div>
        <div className="ml-auto pt-[3px]">
          <GearButton />
        </div>
      </div>
    </header>
  );
}

/* ---------- inspector ---------- */

const sections: { label: string; icon: IconName }[] = [
  { label: "Track Versions", icon: "versions" },
  { label: "Chords", icon: "chords" },
  { label: "Equalizers", icon: "eq" },
  { label: "Inserts", icon: "inserts" },
  { label: "Sends", icon: "sends" },
  { label: "Fader", icon: "fader" },
  { label: "Quick Controls", icon: "knob" },
];

const slider =
  "block h-[7px] w-full appearance-none bg-size-[100%_2px] bg-center bg-no-repeat [&::-webkit-slider-thumb]:h-[5px] [&::-webkit-slider-thumb]:w-[5px] [&::-webkit-slider-thumb]:appearance-none [&::-webkit-slider-thumb]:bg-white";
const sliderIdle = "bg-[linear-gradient(#1d3144,#1d3144)]";

function ChannelBox() {
  return (
    <div className="relative mt-2 ml-[3px] h-[50px] w-[149px]">
      <svg viewBox="0 0 149 50" className="absolute inset-0 h-full w-full" aria-hidden="true">
        <path d="M4 0h141q4 0 4 4v32q0 4-4 4H50q-12 0-22 6-10 6-18 2Q0 43 0 33V4q0-4 4-4z" fill="#a9c2e0" />
      </svg>
      <div className="relative flex h-full flex-col gap-0.5 px-[3px] pt-[2px] text-black">
        <div className="flex gap-1">
          <div className="flex h-[17px] w-[44px] divide-x divide-[#56616e] rounded-sm border border-[#56616e] bg-[#bccbdd] font-[DejaVu_Sans] text-[10px] font-bold">
            <button className="flex-1">m</button>
            <button className="flex-1">S</button>
          </div>
          <div className="flex h-[17px] flex-1 items-center rounded-sm border border-[#56616e] bg-[#bccbdd] font-[DejaVu_Sans] text-[10px] font-bold">
            <button className="h-full w-[23px] rounded-l-sm bg-[#27bb4c]">R</button>
            <button className="w-6">W</button>
            <button aria-label="Crossfade" className="flex w-6 justify-center">
              <Icon name="xfade" size="size-3.5" />
            </button>
          </div>
        </div>
        <div className="flex gap-1">
          <div className="flex w-[44px] gap-0.5">
            <button aria-label="Record enable" className="flex size-[25px] items-center justify-center rounded-full border border-[#7d2025] bg-[#e2474c]">
              <Icon name="dot" size="size-3.5" />
            </button>
            <button aria-label="Monitor" className="flex size-[17px] items-center justify-center rounded-full border border-[#56616e] bg-[#c6d3e2]">
              <Icon name="monitor" size="size-3" />
            </button>
          </div>
          <div className="flex h-[17px] flex-1 items-center rounded-sm border border-[#56616e] bg-[#bccbdd]">
            <button aria-label="Time base" className="flex h-full w-[23px] items-center justify-center bg-[#e2b372]">
              <Icon name="note" size="size-3" />
            </button>
            <button aria-label="Lock" className="flex w-6 justify-center">
              <Icon name="unlock" size="size-3" />
            </button>
            <button aria-label="Lanes" className="flex w-[26px] justify-center">
              <Icon name="lanes" />
            </button>
            <button aria-label="Freeze" className="flex w-[23px] justify-center">
              <Icon name="freeze" size="size-3.5" />
            </button>
          </div>
        </div>
      </div>
    </div>
  );
}

function Inspector() {
  return (
    <aside className="flex w-[173px] shrink-0 flex-col text-[11px] text-[#ededed]">
      <div className="flex h-[22px] text-[12px] font-bold">
        <button className="relative z-10 -mb-0.5 w-[78px] rounded-tl-lg border-2 border-b-0 border-[#56585b] bg-[#25292c]">Inspector</button>
        <button className="ml-3">Visibility</button>
        <button aria-label="Inspector menu" className="mr-1.5 ml-auto flex w-2 flex-col justify-center gap-[3px]">
          <span className="h-0.5 bg-[#c8c9ca]" />
          <span className="h-0.5 bg-[#c8c9ca]" />
        </button>
      </div>
      <div className="flex flex-1 flex-col rounded-tr-lg border-x-2 border-t-2 border-[#56585b] bg-[#25292c] px-[7px] pt-2">
        <div className={clsx(frame, "h-[23px]")}>
          <button aria-label="Collapse" className="flex w-[23px] items-center justify-center bg-[#6f7072]">
            <Icon name="caret" size="size-3.5" />
          </button>
          <button className="flex flex-1 items-center justify-between bg-[#a154ea] pr-0.5 pl-[5px] text-[11px] text-[#1a0a2e]">
            SFX 03 (D)
            <Icon name="right" size="size-2" className="text-black" />
          </button>
          <button aria-label="Edit channel" className="flex w-[23px] items-center justify-center bg-[#6f7072]">
            <Icon name="edit" />
          </button>
        </div>

        <ChannelBox />

        <div className="mt-px mr-[3px] flex gap-[5px]">
          <div className="flex w-[45px] flex-1 flex-col items-end gap-1.5 pt-1 text-[#7f96b3]">
            <Icon name="gainWedge" />
            <Icon name="pan" />
            <Icon name="delay" className="-mr-0.5" size="size-5" />
          </div>
          <div className="h-[67px] w-[102px] rounded-sm border border-[#2c3238] bg-black text-right font-bold text-white">
            <div className="h-[19px] leading-5">2.97</div>
            <input type="range" aria-label="Volume" defaultValue={86} className={clsx(slider, "bg-[linear-gradient(#6b93c6,#6b93c6)]")} />
            <div className="h-3.5 text-center leading-3.5 font-normal text-[#5f7385]">C</div>
            <input type="range" aria-label="Pan" defaultValue={50} className={clsx(slider, sliderIdle)} />
            <div className="h-[11px] leading-3">0.00</div>
            <input type="range" aria-label="Delay" defaultValue={50} className={clsx(slider, sliderIdle)} />
          </div>
        </div>

        <div className="mt-2.5 mr-0.5 ml-[3px] divide-y divide-[#2f3d4a] rounded-sm border border-[#323b44] bg-black text-[11px] leading-4 font-bold text-[#4b5e70]">
          <div className="flex h-[18px] items-center pr-1 pl-[3px]">
            <Icon name="diamond" size="size-3" />
            <span className="ml-1.5 flex-1 font-semibold">No Track Preset</span>
            <Icon name="reset" size="size-3" />
          </div>
          <div className="flex h-[18px] items-center gap-1.5 pl-[3px]">
            <Icon name="input" size="size-3" />
            <span className="text-[#dfe9f2]">Left - Stereo In</span>
          </div>
          <div className="flex h-[18px] items-center gap-1.5 pl-[3px]">
            <Icon name="output" size="size-3" />
            <span className="text-[#dfe9f2]">Stereo Out</span>
          </div>
        </div>

        <label className="relative mt-[5px] mr-1 ml-[3px] flex h-[19px] items-center rounded-sm border border-[#77797b] bg-[#15171a] pl-1">
          <Icon name="ext" size="size-3" />
          <select aria-label="Extension" className="flex-1 appearance-none pl-1 text-[11px] text-white">
            <option>No Extension</option>
          </select>
          <Icon name="caret" size="size-2.5" className="pointer-events-none absolute right-1" />
        </label>

        <div className="mt-6 flex flex-col gap-2.5">
          {sections.map(({ label, icon }) => (
            <div key={label} className={clsx(frame, "h-[23px]")}>
              <button className="flex flex-1 items-center gap-[5px] bg-[#5b5d60] pl-1 text-[11px]">
                <Icon name="right" size="size-3" />
                {label}
              </button>
              <button
                aria-label={`${label} bypass`}
                className={clsx(
                  "flex w-6 items-center justify-center border-l border-[#808285]",
                  label === "Inserts" ? "bg-[#f4e284] text-black" : "bg-[#5b5d60]",
                )}
              >
                <Icon name={icon} />
              </button>
            </div>
          ))}
        </div>
        <button aria-label="Inspector setup" className="mt-2 flex h-[19px] w-[25px] items-center justify-center rounded-[3px] border border-[#77797b] bg-[#15171a]">
          <Icon name="gear" size="size-3.5" />
        </button>
      </div>
      <div className="flex h-5 text-[11px] font-bold">
        <button className="w-[76px] rounded-b-lg border-2 border-t-0 border-[#56585b] bg-[#25292c] pr-2">Track</button>
        <button className="flex-1 rounded-tr-sm border-t-2 border-[#56585b] pr-9">Editor</button>
      </div>
    </aside>
  );
}

/* ---------- track list ---------- */

const plate = "flex h-4 shrink-0 items-center justify-around rounded-sm border border-[#17191b] bg-[#505355] text-[#0b0b0c]";
const glyph = "font-[DejaVu_Sans] text-[10px] leading-3.5 font-bold";

function MuteSolo({ tall }: { tall: boolean }) {
  return (
    <div
      className={clsx(
        "flex w-11 shrink-0 divide-x divide-[#17191b] border-[#17191b] bg-[#505355] text-[#0b0b0c]",
        glyph,
        tall ? "h-4 rounded-sm border" : "h-[13px] border-x",
      )}
    >
      <button className={clsx("flex-1", tall ? "leading-3.5" : "leading-3")}>m</button>
      <button className={clsx("flex-1", tall ? "leading-3.5" : "leading-3")}>S</button>
    </div>
  );
}

function ReadWrite({ read, w = "w-[46px]", light }: { read?: boolean; w?: string; light?: boolean }) {
  return (
    <div
      className={clsx(
        "flex h-4 shrink-0 overflow-hidden rounded-sm border text-[#0b0b0c]",
        w,
        glyph,
        light ? "border-[#8b8c8d] bg-[#f4f4f5]" : "border-[#17191b] bg-[#505355]",
      )}
    >
      <button className={clsx("flex-1", read && "bg-[#27bb4c]")}>R</button>
      <button className="flex-1">W</button>
    </div>
  );
}

function TrackControls({ row }: { row: Row }) {
  if (row.kind === "folder") {
    return (
      <div className="mt-1 ml-[50px] flex h-4 w-[46px] overflow-hidden rounded-sm border border-[#17191b] bg-[#505355] text-black">
        <button aria-label="Record enable" className="flex w-[22px] items-center justify-center bg-[#d95d62]">
          <Icon name="dot" size="size-3" />
        </button>
        <button aria-label="Monitor" className="flex flex-1 items-center justify-center">
          <Icon name="monitor" size="size-3" />
        </button>
      </div>
    );
  }
  return (
    <div className="mt-1 flex">
      <span className="h-4 w-[17px] rounded-sm border border-[#1b1d1f]" />
      <div className={clsx(plate, "ml-[31px] w-[46px]")}>
        <button aria-label="Record enable">
          <Icon name="dot" size="size-3" />
        </button>
        <button aria-label="Monitor">
          <Icon name="monitor" size="size-3" />
        </button>
      </div>
      <div className={clsx(plate, "ml-1", row.kind === "instrument" ? "w-[46px]" : "w-[49px]")}>
        <button aria-label="Edit channel">
          <Icon name="edit" size="size-3" />
        </button>
        <button aria-label={row.kind === "instrument" ? "Edit instrument" : "Input"}>
          <Icon name={row.kind === "instrument" ? "pianoDark" : "ring"} size="size-3" />
        </button>
      </div>
      <span className="w-[3px]" />
      <ReadWrite read={row.read} />
      <button aria-label="Lanes" className={clsx(plate, "ml-1 w-[21px]")}>
        <Icon name="lanes" />
      </button>
    </div>
  );
}

function TrackBody({ row }: { row: Row }) {
  const tall = row.h !== "h-[14px]";

  if (row.kind === "lane") {
    const field = row.selected
      ? "border-[#77787a] bg-[#e9e9e9] text-[#1c1c1c]"
      : "border-[#17191b] bg-[#4f5254] text-[#0e0f10]";
    return (
      <div className={clsx("flex-1 pt-1 pl-1.5", row.selected ? "bg-[#e9e9e9]" : "bg-[#25292c]")}>
        <div className="flex">
          <ReadWrite read w="w-11" light={row.selected} />
          <button className={clsx("ml-1 h-4 w-[125px] rounded-sm border pl-[3px] text-left text-[11px] leading-3.5 whitespace-nowrap", field)}>
            {row.name}
          </button>
          <input
            aria-label={`${row.name} value`}
            defaultValue={row.value}
            className={clsx("ml-0.5 h-4 w-[52px] rounded-sm border text-center text-[11px] leading-3.5", field)}
          />
        </div>
        {row.more && (
          <div
            className={clsx(
              "mt-0.5 flex h-4 w-11 divide-x rounded-sm border text-black",
              row.selected ? "divide-[#8b8c8d] border-[#8b8c8d] bg-[#f4f4f5]" : "divide-[#17191b] border-[#17191b] bg-[#505355]",
            )}
          >
            <button aria-label="Show lanes" className="flex flex-1 items-center justify-center">
              <Icon name="bars" size="size-3" />
            </button>
            <button aria-label="Lock lane" className="flex flex-1 items-center justify-center">
              <Icon name="unlock" size="size-3" />
            </button>
          </div>
        )}
      </div>
    );
  }

  return (
    <div className={clsx("flex-1 overflow-hidden bg-[#25292c]", tall && "pt-[3px]", row.edge ? "pl-[3px]" : "pl-1.5")}>
      <div className={clsx("flex items-center", tall ? "h-4" : "h-[13px]")}>
        <MuteSolo tall={tall} />
        {row.select ? (
          <span
            className={clsx(
              "relative ml-[3px] flex w-[172px] items-center border-x border-[#5a5c5e] bg-[#2c2f32]",
              tall ? "h-4 border-y" : "h-[13px]",
            )}
          >
            <select
              aria-label={`Track ${row.num} name`}
              className={clsx("flex-1 appearance-none pl-px text-[13px] font-bold text-[#f2f2f2]", tall ? "h-3.5 leading-3.5" : "h-[13px] leading-[13px]")}
            >
              <option>{row.name}</option>
            </select>
            <Icon name="caret" size="size-2.5" className="pointer-events-none absolute right-0 text-black" />
          </span>
        ) : (
          <span
            className={clsx(
              "text-[13px] font-bold whitespace-pre text-[#f2f2f2]",
              tall ? "leading-4" : "leading-[13px]",
              row.kind === "folder" ? "ml-1.5" : "ml-1",
            )}
          >
            {row.name}
          </span>
        )}
      </div>
      {row.big && <TrackControls row={row} />}
    </div>
  );
}

const stripIndent = ["w-px", "w-3", "w-[23px]"];
const laneIndent = ["w-3", "w-[23px]", "w-[34px]"];

function TrackRow({ row }: { row: Row }) {
  const depth = row.depth ?? (row.kind === "folder" || row.kind === "marker" ? 0 : 1);
  const tall = row.h !== "h-[14px]";

  return (
    <li className={clsx("flex overflow-hidden border-b border-[#77797a] bg-[#0a0a0a]", row.h)}>
      <span className={clsx("shrink-0", row.kind === "lane" ? laneIndent[depth] : stripIndent[depth])} />
      {row.kind === "lane" && <span className="w-[29px] shrink-0 bg-[#a154ea]" />}
      {row.kind === "marker" && (
        <span className="w-10 shrink-0 bg-[#919293] pt-0.5 pl-0.5 text-white">
          <Icon name="markerTrack" />
        </span>
      )}
      {row.kind === "folder" && (
        <span className="w-[51px] shrink-0 bg-[#919293] pl-0.5 text-white">
          <Icon name="folder" size="size-[18px]" />
        </span>
      )}
      {(row.kind === "audio" || row.kind === "instrument") && (
        <span className={clsx("flex w-10 shrink-0 justify-between pr-1 pl-px text-[10px]", tall ? "pt-0.5 leading-4" : "leading-3", row.color)}>
          <Icon name={row.kind === "audio" ? "wave" : "piano"} size="size-[17px]" className="text-white" />
          <span>{row.num}</span>
        </span>
      )}
      {row.edge && <span className="w-[3px] shrink-0 bg-[#c9d3e2]" />}

      {row.kind === "marker" ? (
        <div className="flex flex-1 items-center bg-[#25292c] pt-px pl-[7px]">
          <div className={clsx(plate, "w-11 divide-x divide-[#17191b]")}>
            <button aria-label="Add marker">
              <Icon name="addMarker" size="size-3.5" />
            </button>
            <button aria-label="Add cycle marker">
              <Icon name="addCycle" size="size-3.5" />
            </button>
          </div>
          <span className="ml-1 text-[13px] leading-4 font-bold text-[#f2f2f2]">{row.name}</span>
        </div>
      ) : (
        <TrackBody row={row} />
      )}
      <span className="w-[11px] shrink-0 bg-black" />
    </li>
  );
}

function TrackList() {
  return (
    <section className="flex w-[361px] shrink-0 flex-col">
      <div className="flex h-[29px] items-center border-b border-[#77797a] pr-0.5 text-white">
        <div className={clsx(frame, "h-[19px] bg-[#5f6063]")}>
          <Tool name="plus" w="w-6" />
          <Tool name="preset" w="w-6" />
        </div>
        <span className="ml-auto h-[19px] w-[63px] bg-[#424548] pl-1 text-[10px] leading-[18px] text-[#ededed]">22 / 22</span>
        <div className={clsx(frame, "h-[19px]")}>
          <Tool name="home" w="w-6" dark />
          <Tool name="list" w="w-6" dark />
        </div>
        <div className={clsx(frame, "ml-2.5 h-[19px]")}>
          <Tool name="find" w="w-[23px]" />
        </div>
      </div>
      <ul>
        {rows.map((row, i) => (
          <TrackRow key={i} row={row} />
        ))}
      </ul>
      <div className="flex h-[18px] items-center justify-end gap-2.5 pr-[5px] text-[#77797a]">
        <span className="mr-auto ml-2 h-px w-1 bg-[#c8c9ca]" />
        <Icon name="caret" size="size-3" />
        <Icon name="gear" size="size-3" />
      </div>
    </section>
  );
}

/* ---------- timeline ---------- */

const thirds = Array.from({ length: 100 }, (_, i) => i).filter((i) => minuteToPx(i / 3) >= 0);

function Ruler() {
  return (
    <div className="relative h-[25px] overflow-hidden bg-[#1b1c20] text-[11px] text-[#e4e4e4]">
      <Canvas>
        {thirds.map((i) => (
          <rect
            key={i}
            x={minuteToPx(i / 3)}
            y={0}
            width={1}
            height={i % 6 === 0 ? 24 : 9}
            fill={i % 6 === 0 ? "#f2f2f2" : i % 3 === 0 ? "#a5a6a7" : "#56585a"}
          />
        ))}
      </Canvas>
      {[4, 8, 12, 16, 20, 24, 28].map((m) => (
        <span key={m} className="absolute top-[9px] leading-4" style={{ left: minuteToPx(m) + 4 }}>
          {m}:00
        </span>
      ))}
    </div>
  );
}

function Timeline() {
  return (
    <section className="flex min-w-0 flex-1 flex-col pt-1">
      <div className="relative overflow-hidden">
        <Ruler />
        <div className="relative">
          <Canvas>
            {thirds.map((i) => (
              <rect
                key={i}
                x={minuteToPx(i / 3)}
                y={0}
                width={1}
                height="100%"
                fill={i % 6 === 0 ? "#7e8081" : i % 3 === 0 ? "#55585a" : "#34383a"}
              />
            ))}
            {markers.map((m) => (
              <rect key={m.at} x={px(m.at)} y={0} width={1} height="100%" fill="#66686a" />
            ))}
          </Canvas>
          {rows.map((row, i) => (
            <div key={i} className={clsx("relative overflow-hidden border-b border-[#484b4d]", row.h)}>
              {row.lane}
            </div>
          ))}
        </div>
        <div className="pointer-events-none absolute inset-y-0 left-[25px] w-1 border-x border-[#e6e6e6] bg-[#25292c]" />
      </div>
      <div className="flex h-[18px] items-start pt-0.5">
        <div className="flex h-3 flex-1 items-center rounded-sm bg-[#424548] px-1 text-[13px] leading-3 font-bold text-white">
          <button aria-label="Scroll left" className="mb-0.5 w-3">
            ‹
          </button>
          <span className="flex h-2 flex-1">
            <span className="ml-[4%] h-2 w-[67%] rounded-sm bg-[#f3f3f3]" />
          </span>
          <button aria-label="Scroll right" className="mb-0.5 w-3">
            ›
          </button>
        </div>
        <div className="flex h-3 w-[108px] items-center gap-1 pl-1 text-[11px] text-[#a8a9aa]">
          <Icon name="caret" size="size-2.5" />
          <span>-</span>
          <input
            type="range"
            aria-label="Horizontal zoom"
            defaultValue={10}
            className="h-2 w-12 appearance-none bg-[linear-gradient(#a8a9aa,#a8a9aa)] bg-size-[100%_1px] bg-center bg-no-repeat [&::-webkit-slider-thumb]:size-1.5 [&::-webkit-slider-thumb]:appearance-none [&::-webkit-slider-thumb]:rounded-full [&::-webkit-slider-thumb]:bg-[#c8c9ca]"
          />
          <span className="ml-1">+</span>
        </div>
      </div>
    </section>
  );
}

const vSlider =
  "w-2 appearance-none bg-[linear-gradient(#a8a9aa,#a8a9aa)] bg-size-[1px_100%] bg-center bg-no-repeat [writing-mode:vertical-lr] [&::-webkit-slider-thumb]:size-1.5 [&::-webkit-slider-thumb]:appearance-none [&::-webkit-slider-thumb]:rounded-full [&::-webkit-slider-thumb]:bg-[#c8c9ca]";

function SideRail() {
  return (
    <div className="flex w-[18px] shrink-0 flex-col items-center pt-1 pr-[5px] text-[11px] leading-3 text-[#a8a9aa]">
      <button aria-label="Track zoom presets" className="flex h-[22px] w-3 items-center justify-center rounded-sm border border-[#808285] bg-[#5f6063] text-white">
        <Icon name="caret" size="size-3" />
      </button>
      <svg viewBox="0 0 8 8" className="mt-2 size-2 shrink-0" aria-hidden="true">
        <path d="M1 7l6-6" stroke="currentColor" strokeWidth="1.200" />
      </svg>
      <input type="range" aria-label="Waveform zoom" defaultValue={100} className={clsx(vSlider, "mt-1.5 h-[52px]")} />
      <div className="mt-1 flex w-3 flex-1 flex-col items-center rounded-sm bg-[#424548] font-bold text-white">
        <button aria-label="Scroll up" className="flex h-[18px] items-center">
          <svg viewBox="0 0 8 8" className="size-2" aria-hidden="true">
            <path d="M1 6l3-3 3 3" fill="none" stroke="currentColor" strokeWidth="1.5" />
          </svg>
        </button>
        <span className="flex w-full flex-1 flex-col items-center">
          <span className="h-[91%] w-2 rounded-sm bg-[#f3f3f3]" />
        </span>
        <button aria-label="Scroll down" className="flex h-3.5 items-center">
          <svg viewBox="0 0 8 8" className="size-2" aria-hidden="true">
            <path d="M1 2l3 3 3-3" fill="none" stroke="currentColor" strokeWidth="1.5" />
          </svg>
        </button>
      </div>
      <Icon name="caret" size="size-2.5" className="mt-1" />
      <span className="mt-0.5">-</span>
      <input type="range" aria-label="Vertical zoom" defaultValue={12} className={clsx(vSlider, "h-[58px]")} />
      <span className="mb-4">+</span>
    </div>
  );
}

/* ---------- bottom transport ---------- */

function Position({ icon, value, label }: { icon: IconName; value: string; label: string }) {
  return (
    <div className={clsx(frame, "h-[25px] w-[150px] bg-[#1b1c20]")}>
      <Tool name={icon} w="w-6" dark={icon === "note"} />
      <input
        aria-label={label}
        defaultValue={value}
        className="min-w-0 flex-1 border-l border-[#808285] pr-1.5 text-right text-[15px] whitespace-pre text-[#ededed]"
      />
    </div>
  );
}

function TransportBar() {
  return (
    <footer className="mt-1 flex h-[39px] items-center bg-[#25292c] pr-1 pl-1 text-[#ededed]">
      <button aria-label="Constrain delay" className="flex h-[25px] w-6 items-center justify-center rounded-[3px] border border-[#808285] bg-[#1b1c20]">
        <Icon name="swirl" />
      </button>
      {(["dot", "wave", "midi"] as IconName[]).map((name) => (
        <div key={name} className="ml-1 flex items-center gap-[3px]">
          <div className={clsx(frame, "h-[25px]")}>
            <Tool name={name} w="w-[25px]" dark />
            <Tool name="caret" w="w-[18px]" dark />
          </div>
          <Handle />
        </div>
      ))}
      <button className="ml-0.5 h-[25px] w-[38px] rounded-[3px] border border-[#808285] bg-[#5f6063] text-[13px]">AQ</button>

      <div className="ml-[252px] flex items-center">
        <Position icon="locL" label="Left locator" value="1.  4.  1.  30" />
        <span className="w-2.5" />
        <Position icon="locR" label="Right locator" value="1.  4.  3.  65" />
        <div className={clsx(frame, "mr-[3px] ml-[5px] h-[25px]")}>
          <Tool name="lock" w="w-6" active />
          <Tool name="punchIn" w="w-6" />
          <Tool name="punchOut" />
        </div>
        <Handle />
        <Transport className="ml-1" />
        <Handle className="mr-1 ml-0.5" />
        <div className={clsx(frame, "h-[25px]")}>
          <Tool name="pre" w="w-[35px]" />
        </div>
        <span className="w-1.5" />
        <Position icon="note" label="Primary time" value="61.  1.  3.  63" />
        <Handle className="mx-[3px]" />
        <div className={clsx(frame, "h-[25px] items-center bg-[#1b1c20]")}>
          <Tool name="tempo" w="w-[25px]" active />
          <input aria-label="Tempo" defaultValue="120.000" className="w-[62px] pl-3 text-[12px]" />
          <Icon name="spin" className="mx-px" />
        </div>
        <Handle className="ml-1" />
      </div>

      <div className={clsx(frame, "ml-auto h-[25px]")}>
        <Tool name="click" w="w-6" />
        <Tool name="edit" w="w-6" />
      </div>
      <Handle className="mx-1" />
      <div className={clsx(frame, "h-[25px] w-[89px] bg-[#1b1c20]")}>
        <span className="w-[26px] border-r border-[#56585a]" />
      </div>
      <Handle className="mx-[3px]" />
      <div className={clsx(frame, "h-[25px]")}>
        <Tool name="gear" w="w-[17px]" dark />
      </div>
    </footer>
  );
}

export default function App() {
  return (
    <div className="min-h-screen w-full overflow-hidden bg-[#070707] font-['Noto_Sans','Open_Sans',sans-serif]">
      <Toolbar />
      <main className="mt-1 flex gap-1 pr-0.5 pl-[3px]">
        <Inspector />
        <div className="flex min-w-0 flex-1 rounded-lg border-2 border-[#5b5d60] bg-[#25292c] pl-1">
          <TrackList />
          <div className="flex w-[3px] shrink-0 flex-col justify-center bg-[#77797a]">
            <span className="h-6 border-l-2 border-dashed border-white" />
          </div>
          <Timeline />
          <SideRail />
        </div>
      </main>
      <TransportBar />
    </div>
  );
}
